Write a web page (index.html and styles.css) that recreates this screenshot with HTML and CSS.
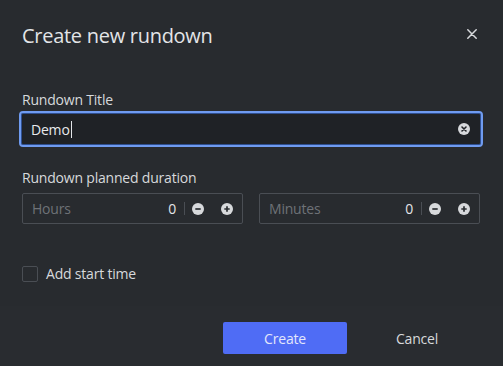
FILE: index.html
```html
<!DOCTYPE html>
<html>
<head>
<meta charset="utf-8">
<link rel="stylesheet" href="styles.css">
</head>
<body>
<div class="dialog">
  <div class="header">
    <h1 class="title">Create new rundown</h1>
    <button class="close" aria-label="Close">
      <svg width="10" height="10" viewBox="0 0 10 10"><path d="M0.8 0.8L9.2 9.2M9.2 0.8L0.8 9.2" stroke="#d7d9dc" stroke-width="1.5" stroke-linecap="round"/></svg>
    </button>
  </div>
  <div class="body">
    <div class="field">
      <label class="label">Rundown Title</label>
      <div class="text-input focused">
        <span class="value">Demo</span><span class="caret"></span>
        <span class="spacer"></span>
        <svg class="clear" width="12" height="12" viewBox="0 0 12 12"><circle cx="6" cy="6" r="6" fill="#d7d9dc"/><path d="M4 4L8 8M8 4L4 8" stroke="#202327" stroke-width="1.6" stroke-linecap="round"/></svg>
      </div>
    </div>
    <div class="field duration">
      <label class="label">Rundown planned duration</label>
      <div class="num-row">
        <div class="num-input">
          <span class="placeholder">Hours</span>
          <span class="num">0</span>
          <span class="divider"></span>
          <svg class="btn-icon" width="12" height="12" viewBox="0 0 12 12"><circle cx="6" cy="6" r="6" fill="#d7d9dc"/><path d="M3.3 6H8.7" stroke="#2a2d31" stroke-width="1.7"/></svg>
          <svg class="btn-icon plus" width="12" height="12" viewBox="0 0 12 12"><circle cx="6" cy="6" r="6" fill="#d7d9dc"/><path d="M3.3 6H8.7M6 3.3V8.7" stroke="#2a2d31" stroke-width="1.7"/></svg>
        </div>
        <div class="num-input">
          <span class="placeholder">Minutes</span>
          <span class="num">0</span>
          <span class="divider"></span>
          <svg class="btn-icon" width="12" height="12" viewBox="0 0 12 12"><circle cx="6" cy="6" r="6" fill="#d7d9dc"/><path d="M3.3 6H8.7" stroke="#2a2d31" stroke-width="1.7"/></svg>
          <svg class="btn-icon plus" width="12" height="12" viewBox="0 0 12 12"><circle cx="6" cy="6" r="6" fill="#d7d9dc"/><path d="M3.3 6H8.7M6 3.3V8.7" stroke="#2a2d31" stroke-width="1.7"/></svg>
        </div>
      </div>
    </div>
    <label class="check">
      <span class="box"></span>
      <span class="check-label">Add start time</span>
    </label>
  </div>
  <div class="footer">
    <button class="primary">Create</button>
    <button class="ghost">Cancel</button>
  </div>
</div>
</body>
</html>
```

FILE: styles.css
```css
* { box-sizing: border-box; }
html, body {
  margin: 0;
  padding: 0;
  background: #282b2f;
  font-family: "Open Sans", "Noto Sans", sans-serif;
  color: #d7d9dc;
  letter-spacing: -0.2px;
}
.dialog {
  width: 503px;
  height: 366px;
  display: flex;
  flex-direction: column;
  background: #282b2f;
}
.header {
  display: flex;
  align-items: flex-start;
  justify-content: space-between;
  padding: 22px 26px 0 22px;
  height: 90px;
  flex: none;
}
.title {
  margin: 0;
  font-size: 20px;
  font-weight: 400;
  line-height: 27px;
  letter-spacing: -0.28px;
  color: #e3e5e8;
}
.close {
  background: none;
  border: 0;
  padding: 0;
  margin-top: 7px;
  width: 10px;
  height: 10px;
  display: flex;
}
.body {
  padding: 0 20px 0 19px;
  flex: 1;
}
.field { display: flex; flex-direction: column; }
.label {
  font-size: 14px;
  line-height: 19px;
  color: #d7d9dc;
  padding-left: 3px;
  margin-bottom: 2px;
}
.text-input {
  height: 36px;
  border: 2px solid #6f9bf0;
  border-radius: 4px;
  background: #1f2226;
  display: flex;
  align-items: center;
  padding: 0 11px 0 10px;
  box-shadow: 0 0 0 1px #2f4f8f inset;
}
.value {
  font-size: 14px;
  color: #e8eaed;
}
.caret {
  width: 1px;
  height: 17px;
  background: #e3e5e8;
  margin-left: 1px;
}
.spacer { flex: 1; }
.clear { display: block; }
.duration { margin-top: 21px; }
.duration .label { margin-bottom: 6px; }
.num-row {
  display: flex;
  gap: 16px;
  padding-left: 3px;
}
.num-input {
  width: 221px;
  height: 31px;
  border: 1px solid #4a4e54;
  border-radius: 2px;
  display: flex;
  align-items: center;
  padding: 0 9px 0 9px;
}
.placeholder {
  font-size: 14px;
  color: #6e7277;
  flex: 1;
}
.num {
  font-size: 14px;
  color: #e3e5e8;
}
.divider {
  width: 1px;
  height: 13px;
  background: #4a4e54;
  margin: 0 7px 0 8px;
}
.btn-icon { display: block; }
.btn-icon.plus { margin-left: 17px; }
.check {
  display: flex;
  align-items: center;
  margin-top: 40px;
  padding-left: 3px;
}
.box {
  width: 16px;
  height: 16px;
  border: 1px solid #4a4e54;
  border-radius: 2px;
  margin-right: 8px;
}
.check-label {
  font-size: 14px;
  color: #d7d9dc;
}
.footer {
  height: 60px;
  flex: none;
  background: #292c30;
  display: flex;
  align-items: flex-start;
  padding: 16px 0 0 223px;
}
.primary {
  width: 124px;
  height: 32px;
  border: 0;
  border-radius: 2px;
  background: #4f6cf5;
  color: #e3e7fb;
  font-family: inherit;
  font-size: 14px;
  letter-spacing: inherit;
}
.ghost {
  background: none;
  border: 0;
  color: #d7d9dc;
  font-family: inherit;
  font-size: 14px;
  letter-spacing: inherit;
  margin-left: 49px;
  height: 32px;
  padding: 0;
}
```
